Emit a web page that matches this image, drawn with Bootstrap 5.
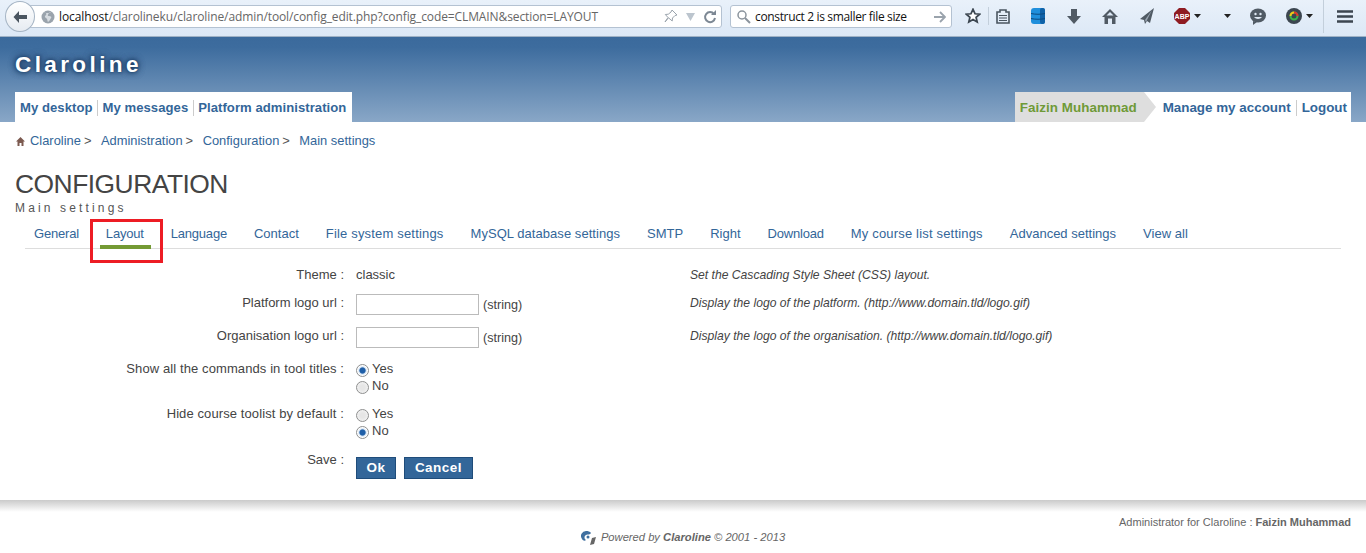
<!DOCTYPE html>
<html lang="en">
<head>
  <meta charset="UTF-8">
  <meta name="viewport" content="width=device-width, initial-scale=1">
  <title>Claroline - Configuration</title>
  <link href="https://cdn.jsdelivr.net/npm/bootstrap@5.3.0/dist/css/bootstrap.min.css" rel="stylesheet">
  <style>
    body { font-family: "Liberation Sans", Arial, sans-serif; font-size: 13px; color: #444; background: #fff; overflow: hidden; }
    a { color: #336699; text-decoration: none; }

    .ff-bar { height: 37px; background: linear-gradient(#e9f1fa, #dce8f6); border-bottom: 1px solid #9fb2c6; padding-left: 5px; }
    .ff-back { width: 30px; height: 31px; border-radius: 50%; border: 1px solid #a5b4c4; background: linear-gradient(#fff, #e6ebf1); margin-top: 1px; z-index: 1; }
    .ff-url { width: 692px; height: 23px; margin-top: 5px; margin-left: -5px; background: #fff; border: 1px solid #b4c2d2; border-radius: 0 3px 3px 0; font-family: "Open Sans", sans-serif; font-size: 12px; color: #666; letter-spacing: -0.1px; padding-left: 10px; }
    .ff-url b { font-weight: 400; color: #111; }
    .ff-search { width: 222px; height: 23px; margin-top: 5px; margin-left: 8px; background: #fff; border: 1px solid #b4c2d2; border-radius: 3px; font-family: "Open Sans", sans-serif; font-size: 12px; color: #111; letter-spacing: -0.35px; padding: 0 5px; }
    .ff-icons { margin-left: 13px; height: 32px; }
    .ff-icons > * { flex-shrink: 0; }
    .ff-sep { width: 1px; height: 18px; background: #c3cfdb; margin: 0 7px; }
    .ff-sep-long { width: 1px; height: 33px; background: #c3cfdb; margin: 0 13px 0 10px; }
    .i-db { margin-left: 21px; }
    .i-arrow { margin-left: 22px; }
    .i-home { margin-left: 21px; }
    .i-plane { margin-left: 22px; }
    .i-abp { margin-left: 20px; }
    .i-caret { margin-left: 23px; }
    .i-chat { margin-left: 19px; }
    .i-color { margin-left: 20px; }

    .site-head { height: 85px; background: linear-gradient(#3b6a9c 0, #3d6c9e 12%, #89a7c7 100%); padding: 0 15px; }
    .site-logo { height: 55px; font-size: 22.5px; font-weight: 700; letter-spacing: 3.4px; color: #fff; text-shadow: 0 0 3px #1d3f68, 0 0 7px #1d3f68, 0 0 7px #1d3f68; padding-top: 16px; line-height: 24px; }
    .tab-strip { height: 30px; background: #fff; font-size: 13.1px; letter-spacing: 0.05px; font-weight: 700; padding: 2px 6px 0 5px; line-height: 28px; }
    .tab-strip .pipe { border-left: 1px solid #ccc; height: 16px; margin: 0 4.5px; }
    .user-strip { padding: 0 4px 0 0; font-size: 13.4px; letter-spacing: 0; }
    .who { background: #dedede; color: #6f9a37; height: 30px; line-height: 32px; padding-left: 5px; padding-right: 7px; position: relative; margin-right: 12px; letter-spacing: 0.05px; }
    .who::after { content: ""; position: absolute; left: 100%; top: 0; border-style: solid; border-width: 15px 0 15px 12px; border-color: transparent transparent transparent #dedede; }
    .user-links { padding-left: 7px; padding-top: 2px; }
    .user-links .pipe { margin: 0 5px; }

    .crumbs { padding: 11px 0 0 16px; height: 46px; font-size: 12.9px; line-height: 16px; }
    .crumbs .sep { margin-right: 9.5px; margin-left: 3px; color: #555; }
    .crumb-home { margin-right: 5px; }
    .page-title { padding: 1px 0 0 15px; font-size: 26.4px; line-height: 31px; margin: 0; font-weight: 400; color: #444; letter-spacing: -0.5px; }
    .page-sub { padding: 1px 0 0 15px; font-size: 12px; line-height: 14px; letter-spacing: 3.15px; color: #555; }

    .cfg-tabs { margin: 1px 25px 0 25px; height: 33px; border-bottom: 1px solid #ddd; font-size: 13px; line-height: 16px; list-style: none; padding: 10px 0 0 9px; }
    .cfg-tabs li { margin-right: 27px; position: relative; }
    .cfg-tabs li.on::after { content: ""; position: absolute; left: -6px; right: -7px; top: 19px; height: 4px; background: #749a34; }
    .cfg-tabs li.on::before { content: ""; position: absolute; left: -16px; right: -19px; top: -7px; height: 44px; border: 3px solid #ed1c24; }
    .ls-tight { letter-spacing: -0.2px; }
    .ls-wide { letter-spacing: 0.18px; }
    .ls-mid { letter-spacing: 0.05px; }

    .cfg-form { height: 251px; padding-top: 18px; }
    .cfg-row { display: flex; }
    .cfg-label { width: 344px; flex: none; text-align: right; }
    .cfg-val { width: 334px; flex: none; margin-left: 12px; display: flex; align-items: flex-start; }
    .cfg-help { font-style: italic; font-size: 12.15px; color: #444; }
    .r-text { height: 29px; line-height: 16px; }
    .r-input { height: 33px; line-height: 16px; }
    .r-input-last { height: 32px; }
    .r-input .cfg-label, .r-input .cfg-help { margin-top: -1px; }
    .box { width: 123px; height: 21px; border: 1px solid #bbb; background: #fff; margin-top: -2px; margin-right: 4px; }
    .box-note { font-size: 12.6px; padding-top: 1px; }
    .radios { line-height: 16.5px; }
    .rad { display: flex; align-items: center; gap: 3px; height: 16.5px; }
    .rad i { width: 13px; height: 13px; border-radius: 50%; border: 1px solid #8e8f8f; background: radial-gradient(#e6e6e6 30%, #f8f8f8 100%); margin-top: 3px; }
    .rad i.sel { background: radial-gradient(#1f5fa8 0 34%, #cfe0f2 46%, #fff 62%); }
    .cfg-multi { height: 45px; line-height: 16.5px; }
    .cfg-multi .cfg-label { letter-spacing: 0.1px; }
    .cfg-save .cfg-label { margin-top: -1px; }
    .cfg-save .cfg-val { margin-top: 6px; }
    .act-btn { background: #336699; color: #fff; font-weight: 700; font-size: 13.5px; line-height: 17px; border: 1px solid #1f4c7a; padding: 1px 10px 2px; border-radius: 0; margin-right: 8px; letter-spacing: 0.45px; }
    .act-ok { padding: 1px 9.5px 2px; }

    .page-foot { height: 53px; background: linear-gradient(#cacaca, #fff 12px); font-size: 11.03px; color: #666; padding-top: 16px; }
    .foot-admin { padding-right: 15px; text-align: right; line-height: 13px; }
    .foot-power { justify-content: center; font-style: italic; font-size: 11.2px; padding-top: 2px; line-height: 13px; gap: 5px; }
  </style>
</head>
<body>

  <div class="ff-bar d-flex align-items-start">
    <div class="ff-back d-flex align-items-center justify-content-center flex-shrink-0">
      <svg width="16" height="14" viewBox="0 0 16 14"><path d="M7 1 1.500 7 7 13V9h8V5H7z" fill="#4a5560"/></svg>
    </div>
    <div class="ff-url d-flex align-items-center flex-shrink-0 position-relative">
      <svg class="me-1 flex-shrink-0" width="14" height="14" viewBox="0 0 14 14"><circle cx="7" cy="7" r="6.500" fill="#9aa3ac"/><path d="M3 3c2-1 3 1 2 2S3 7 5 8s1 3 2 4c2-1 2-3 3-4s0-2-2-2-1-2 0-3 2 0 2 0" fill="#d7dce1"/></svg>
      <span class="flex-grow-1"><b>localhost</b>/clarolineku/claroline/admin/tool/config_edit.php?config_code=CLMAIN&amp;section=LAYOUT</span>
      <svg class="me-2" width="15" height="15" viewBox="0 0 15 15"><path d="M9 1l5 5-2 .5-2.500 2.500-.3 3L5.500 8.800 2 13l3-4.500L2.300 5.500l3-.3L8 3z" fill="none" stroke="#9aa3ac"/></svg>
      <svg class="me-2" width="9" height="8" viewBox="0 0 9 8"><path d="M0 0h9L4.500 8z" fill="#bcc5ce"/></svg>
      <svg class="me-1" width="14" height="14" viewBox="0 0 14 14"><path d="M11 4a5 5 0 1 0 1 4" fill="none" stroke="#7d8894" stroke-width="2"/><path d="M8 5h5V0z" fill="#7d8894"/></svg>
    </div>
    <div class="ff-search d-flex align-items-center flex-shrink-0 gap-1">
      <svg width="15" height="15" viewBox="0 0 15 15"><circle cx="6" cy="6" r="4" fill="none" stroke="#8b949d" stroke-width="1.500"/><path d="M9 9l5 5" stroke="#8b949d" stroke-width="2"/></svg>
      <span class="flex-grow-1">construct 2 is smaller file size</span>
      <svg width="13" height="12" viewBox="0 0 13 12"><path d="M7 1l5 5-5 5M12 6H1" fill="none" stroke="#9aa3ac" stroke-width="1.800"/></svg>
    </div>
    <div class="ff-icons d-flex align-items-center">
      <svg width="16" height="16" viewBox="0 0 18 18"><path d="M9 1.500l2.300 5 5.200.5-4 3.500 1.200 5.200L9 13l-4.700 2.700 1.200-5.200-4-3.500 5.200-.5z" fill="#fff" stroke="#3c4650" stroke-width="2"/></svg>
      <span class="ff-sep"></span>
      <svg width="14" height="15" viewBox="0 0 14 15"><path d="M1 3h3V1h6v2h3v11H1z" fill="none" stroke="#4a5560" stroke-width="1.600"/><path d="M3 6.500h8M3 9h8M3 11.500h8" stroke="#4a5560" stroke-width="1.200"/></svg>
      <svg class="i-db" width="14" height="16" viewBox="0 0 14 16"><rect width="14" height="16" rx="3" fill="#1f8fdc"/><rect x="9" width="5" height="16" rx="2" fill="#0f62a8"/><path d="M0 5.500c4 1 10 1 14 0M0 10.500c4 1 10 1 14 0" stroke="#0b4a80" fill="none"/></svg>
      <svg class="i-arrow" width="14" height="15" viewBox="0 0 14 15"><path d="M4 0h6v7h4l-7 8-7-8h4z" fill="#505a64"/></svg>
      <svg class="i-home" width="16" height="15" viewBox="0 0 16 15"><path d="M8 0L0 8h2.500v7h3.500V9.500h4V15h3.500V8H16z" fill="#505a64"/><path d="M8 3L4.500 6.500h7z" fill="#dce8f6"/></svg>
      <svg class="i-plane" width="14" height="16" viewBox="0 0 14 16"><path d="M14 0L0 11l4 1 1 4 2-3 3 2z" fill="#505a64"/><path d="M12 2L5 12l1 2z" fill="#9aa6b2"/></svg>
      <span class="i-abp d-flex align-items-center">
        <svg width="16" height="16" viewBox="0 0 16 16"><path d="M5 0h6l5 5v6l-5 5H5L0 11V5z" fill="#8f1c22"/><text x="8" y="11" font-size="7" font-weight="700" fill="#fff" text-anchor="middle" font-family="Liberation Sans">ABP</text></svg>
        <svg class="ms-1" width="7" height="4" viewBox="0 0 7 4"><path d="M0 0h7L3.500 4z" fill="#222"/></svg>
      </span>
      <svg class="i-caret" width="7" height="4" viewBox="0 0 7 4"><path d="M0 0h7L3.500 4z" fill="#222"/></svg>
      <svg class="i-chat" width="16" height="17" viewBox="0 0 16 17"><ellipse cx="8" cy="7.500" rx="8" ry="7" fill="#505a64"/><path d="M3 13l0 4 4-3z" fill="#505a64"/><circle cx="5.500" cy="6" r="1.200" fill="#dfe9f4"/><circle cx="10.500" cy="6" r="1.200" fill="#dfe9f4"/><path d="M4 9c2 2.500 6 2.500 8 0z" fill="#dfe9f4"/></svg>
      <span class="i-color d-flex align-items-center">
        <svg width="16" height="16" viewBox="0 0 16 16"><circle cx="8" cy="8" r="8" fill="#3c4650"/><circle cx="8" cy="8" r="3.500" fill="none" stroke="#3cb54a" stroke-width="2"/><path d="M8 4.500a3.500 3.500 0 0 1 3.500 3.500" fill="none" stroke="#e0342c" stroke-width="2"/><path d="M4.500 8A3.500 3.500 0 0 1 8 4.500" fill="none" stroke="#f5c518" stroke-width="2"/></svg>
        <svg class="ms-1" width="7" height="4" viewBox="0 0 7 4"><path d="M0 0h7L3.500 4z" fill="#222"/></svg>
      </span>
      <span class="ff-sep-long"></span>
      <svg width="16" height="13" viewBox="0 0 16 13"><path d="M0 1.500h16M0 6.500h16M0 11.500h16" stroke="#3c4650" stroke-width="2.600"/></svg>
    </div>
  </div>

  <header class="site-head">
    <div class="site-logo">Claroline</div>
    <div class="d-flex justify-content-between">
      <div class="tab-strip d-flex align-items-center">
        <a href="#">My desktop</a><span class="pipe"></span><a href="#">My messages</a><span class="pipe"></span><a href="#">Platform administration</a>
      </div>
      <div class="tab-strip user-strip d-flex align-items-center">
        <span class="who">Faizin Muhammad</span>
        <span class="user-links d-flex align-items-center"><a href="#">Manage my account</a><span class="pipe"></span><a href="#">Logout</a></span>
      </div>
    </div>
  </header>

  <nav class="crumbs d-flex align-items-start">
    <svg class="crumb-home mt-1" width="9" height="9" viewBox="0 0 9 9"><path d="M4.500 0L0 4.500h1.500V9h2V6h2v3h2V4.500H9z" fill="#7c5a50"/></svg>
    <a href="#">Claroline</a><span class="sep">&gt;</span>
    <a href="#">Administration</a><span class="sep">&gt;</span>
    <a href="#">Configuration</a><span class="sep">&gt;</span>
    <a href="#">Main settings</a>
  </nav>

  <h1 class="page-title">CONFIGURATION</h1>
  <div class="page-sub">Main settings</div>

  <ul class="cfg-tabs d-flex">
    <li class="ls-tight"><a href="#">General</a></li>
    <li class="on ls-tight"><a href="#">Layout</a></li>
    <li class="ls-tight"><a href="#">Language</a></li>
    <li><a href="#">Contact</a></li>
    <li class="ls-wide"><a href="#">File system settings</a></li>
    <li class="ls-mid"><a href="#">MySQL database settings</a></li>
    <li><a href="#">SMTP</a></li>
    <li><a href="#">Right</a></li>
    <li class="ls-tight"><a href="#">Download</a></li>
    <li class="ls-wide"><a href="#">My course list settings</a></li>
    <li><a href="#">Advanced settings</a></li>
    <li class="ls-mid"><a href="#">View all</a></li>
  </ul>

  <form class="cfg-form">
    <div class="cfg-row r-text">
      <div class="cfg-label">Theme :</div>
      <div class="cfg-val">classic</div>
      <div class="cfg-help">Set the Cascading Style Sheet (CSS) layout.</div>
    </div>
    <div class="cfg-row r-input">
      <div class="cfg-label">Platform logo url :</div>
      <div class="cfg-val"><span class="box"></span><span class="box-note">(string)</span></div>
      <div class="cfg-help">Display the logo of the platform. (http://www.domain.tld/logo.gif)</div>
    </div>
    <div class="cfg-row r-input r-input-last">
      <div class="cfg-label">Organisation logo url :</div>
      <div class="cfg-val"><span class="box"></span><span class="box-note">(string)</span></div>
      <div class="cfg-help">Display the logo of the organisation. (http://www.domain.tld/logo.gif)</div>
    </div>
    <div class="cfg-row cfg-multi">
      <div class="cfg-label">Show all the commands in tool titles :</div>
      <div class="cfg-val"><div class="radios">
        <div class="rad"><i class="sel"></i>Yes</div>
        <div class="rad"><i></i>No</div>
      </div></div>
    </div>
    <div class="cfg-row cfg-multi">
      <div class="cfg-label">Hide course toolist by default :</div>
      <div class="cfg-val"><div class="radios">
        <div class="rad"><i></i>Yes</div>
        <div class="rad"><i class="sel"></i>No</div>
      </div></div>
    </div>
    <div class="cfg-row cfg-save">
      <div class="cfg-label">Save :</div>
      <div class="cfg-val"><button type="button" class="act-btn act-ok">Ok</button><button type="button" class="act-btn">Cancel</button></div>
    </div>
  </form>

  <footer class="page-foot">
    <div class="foot-admin">Administrator for Claroline : <b>Faizin Muhammad</b></div>
    <div class="foot-power d-flex">
      <svg width="15" height="14" viewBox="0 0 15 14"><path d="M5 0a5 5 0 0 0-4 8c1 2 3 2 4 1-2-1-2-4 0-5 2-1 4 0 5-2-1-1.500-3-2-5-2z" fill="#3f6f9f"/><circle cx="7" cy="6" r="1.500" fill="#3f6f9f"/><path d="M9 14l2-7 4-1-2 7z" fill="#666"/></svg>
      <span>Powered by <b>Claroline</b> © 2001 - 2013</span>
    </div>
  </footer>

  <script src="https://cdn.jsdelivr.net/npm/bootstrap@5.3.0/dist/js/bootstrap.bundle.min.js"></script>
</body>
</html>
